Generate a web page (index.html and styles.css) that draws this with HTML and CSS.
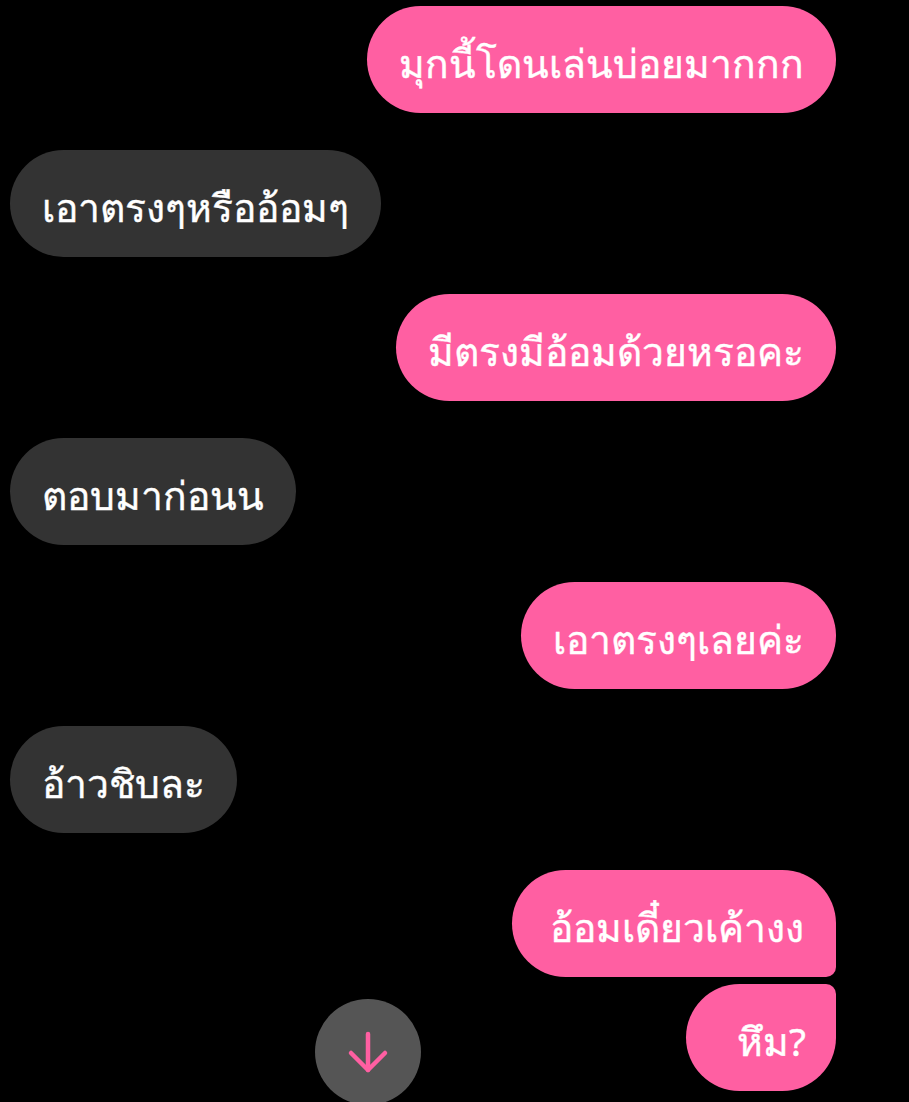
FILE: index.html
```html
<!DOCTYPE html>
<html lang="th">
<head>
  <meta charset="UTF-8" />
  <meta name="viewport" content="width=device-width, initial-scale=1.0" />
  <title>Chat</title>
  <link rel="stylesheet" href="styles.css">
</head>
<body>
  <div class="chat">
    <div class="msg me">มุกนี้โดนเล่นบ่อยมากกก</div>
    <div class="msg them">เอาตรงๆหรืออ้อมๆ</div>
    <div class="msg me">มีตรงมีอ้อมด้วยหรอคะ</div>
    <div class="msg them">ตอบมาก่อนน</div>
    <div class="msg me">เอาตรงๆเลยค่ะ</div>
    <div class="msg them">อ้าวชิบละ</div>
    <div class="group">
      <div class="msg me first">อ้อมเดี๋ยวเค้างง</div>
      <div class="msg me last">หึม?</div>
    </div>
  </div>

  <button class="scroll-down" aria-label="Scroll down">
    <svg width="44" height="44" viewBox="0 0 44 44" fill="none" stroke="#ff5fa2" stroke-width="4.5" stroke-linecap="round" stroke-linejoin="round">
      <path d="M22 4v36" />
      <path d="M5 23l17 17 17-17" />
    </svg>
  </button>
</body>
</html>
```

FILE: styles.css
```css
* {
  box-sizing: border-box;
  margin: 0;
  padding: 0;
}

body {
  background: #000;
  width: 909px;
  height: 1102px;
  overflow: hidden;
  position: relative;
  font-family: 'Noto Sans', 'DejaVu Sans', sans-serif;
}

.chat {
  display: flex;
  flex-direction: column;
  gap: 37px;
  padding: 6px 73px 0 10px;
}

.group {
  display: flex;
  flex-direction: column;
  align-items: flex-end;
  gap: 7px;
}

.msg {
  height: 107px;
  line-height: 101px;
  padding: 6px 32px 0;
  border-radius: 54px;
  font-size: 39px;
  font-weight: 400;
  -webkit-text-stroke: 0.4px #fff;
  color: #fff;
  white-space: nowrap;
}

.me {
  align-self: flex-end;
  background: #ff5fa2;
}

.them {
  align-self: flex-start;
  background: #333;
}

.me.first {
  padding: 6px 32px 0 38px;
  border-bottom-right-radius: 10px;
}

.me.last {
  padding: 6px 30px 0 51px;
  border-top-right-radius: 10px;
}

.scroll-down {
  position: absolute;
  left: 315px;
  top: 999px;
  width: 106px;
  height: 106px;
  border-radius: 50%;
  border: none;
  background: #555;
  display: flex;
  align-items: center;
  justify-content: center;
}
```
